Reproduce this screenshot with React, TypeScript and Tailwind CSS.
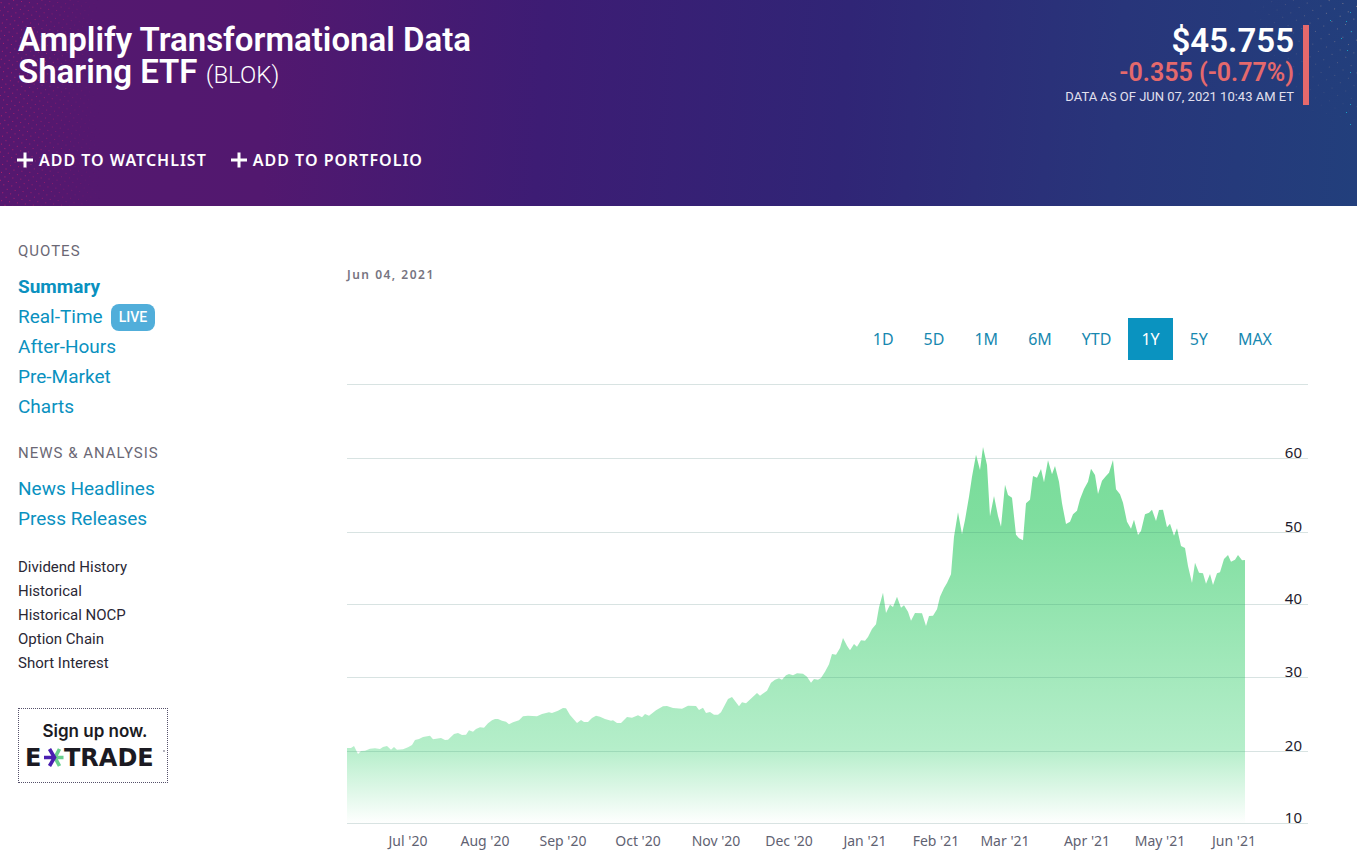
import React from "react";

interface NavLink {
  label: string;
  active?: boolean;
  live?: boolean;
}

const QUOTE_LINKS: NavLink[] = [
  { label: "Summary", active: true },
  { label: "Real-Time", live: true },
  { label: "After-Hours" },
  { label: "Pre-Market" },
  { label: "Charts" },
];

const NEWS_LINKS: NavLink[] = [
  { label: "News Headlines" },
  { label: "Press Releases" },
];

const MORE_LINKS = [
  "Dividend History",
  "Historical",
  "Historical NOCP",
  "Option Chain",
  "Short Interest",
];

const RANGES = ["1D", "5D", "1M", "6M", "YTD", "1Y", "5Y", "MAX"];

const GRID = [
  { y: 384.5, label: "" },
  { y: 458.5, label: "60" },
  { y: 532.5, label: "50" },
  { y: 604.5, label: "40" },
  { y: 677.5, label: "30" },
  { y: 751.5, label: "20" },
  { y: 823.5, label: "10" },
];

const MONTHS = [
  { x: 408, label: "Jul '20" },
  { x: 485, label: "Aug '20" },
  { x: 563, label: "Sep '20" },
  { x: 638, label: "Oct '20" },
  { x: 716, label: "Nov '20" },
  { x: 789, label: "Dec '20" },
  { x: 865, label: "Jan '21" },
  { x: 936, label: "Feb '21" },
  { x: 1005, label: "Mar '21" },
  { x: 1087, label: "Apr '21" },
  { x: 1160, label: "May '21" },
  { x: 1234, label: "Jun '21" },
];

// Closing prices, one x,y pair per session
const SERIES =
  "347,748 351,748 354,746 358,754 361,751 365,750.7 370,748.7 375,748.3 380,749 383,747 387,746 391,749.7 394,747 397,749.7 403,749.3 408,747.3 412,745 415,740 419,739 423,737 430,735.7 433,739.3 441,738 445,740 448,739.7 454,734 458,733 462,735 466,734.7 469,730.3 473,731.7 476,729 480,727.3 484,727.7 488,723.3 492,720.3 495,719 498,719 502,720.7 506,721.7 509,724.3 513,722.3 519,720.3 523,716.3 528,715.7 537,716.3 542,714 549,712.3 552,713 558,710.7 563,708 566,708.3 570,715 577,723 581,720 584,722 588,722 592,718 596,715.7 600,716.7 605,719 611,720.7 613,720.3 617,723 621,723 627,717 632,717.7 638,715.3 642,717.3 645,714 649,715.7 656,710.3 663,706.3 " +
  "667,706 673,708 682,708.7 688,705.7 696,706 699,710 703,707.7 706,713 710,712 714,714.7 718,714.7 721,712.3 728,699 732,697 739,706.3 742,702.3 746,703.3 757,693 760,695.7 767,690.7 771,682.7 775,679.7 779,678.3 782,679.7 786,675.3 789,674 793,675.3 797,673.3 803,673.7 807,676.7 811,682.7 814,679 818,679.7 821,678 825,671.7 829,664.3 832,654 836,654.7 840,648 843,638 847,645.7 850,650.3 854,644 857,646.7 861,640.3 865,640.7 868,637 872,629 876,624.3 879,607.3 883,592.7 886,613 890,604.7 893,607 897,596.7 901,607.7 904,605.3 908,611.7 911,620.7 915,613 922,613.3 926,626 929,616 933,615.7 937,609.3 " +
  "940,596.7 944,588 947,583 951,574.3 954,536.7 958,512.3 962,534.3 965,520 969,496.7 972,476.7 976,454.7 980,470 983,447 987,465 990,516.3 994,496 998,516 1001,526.7 1005,484.7 1008,495 1012,497.7 1016,534.7 1019,538.3 1023,540.3 1026,503.3 1030,499.7 1033,476 1037,477.7 1041,469 1044,482.3 1048,460.3 1052,474.3 1055,466 1059,481.7 1062,503.3 1066,524 1070,521.7 1073,514.3 1077,510.7 1080,499.3 1084,489 1088,481.7 1091,468.7 1095,475 1098,494 1102,480.7 " +
  "1106,476 1109,472.7 1113,460 1116,489.3 1120,494.3 1123,502.7 1127,521.7 1131,528.7 1134,519.7 1138,535 1141,531 1145,514.3 1149,512.7 1152,509.7 1156,521 1159,510 1163,509.7 1167,527.3 1170,523.7 1174,535.7 1177,528.3 1181,546 1185,548 1188,566 1192,583 1195,562.7 1199,572.7 1203,573.3 1206,583.7 1210,574 1213,585 1217,573.3 1220,572.3 1224,559 1228,555 1231,561.7 1235,559.7 1238,555 1242,560.3 1245,560";

const PlusIcon = () => (
  <svg viewBox="0 0 16 16" className="w-4 h-4" aria-hidden="true">
    <path d="M8 0.5V15.5M0 8H16" stroke="currentColor" strokeWidth="3" />
  </svg>
);

// Halftone dots in the header corners
const HeaderDots = () => (
  <svg
    className="absolute inset-0 w-full h-full pointer-events-none"
    aria-hidden="true"
  >
    <defs>
      <pattern
        id="dotsRed"
        width="8"
        height="8"
        patternUnits="userSpaceOnUse"
        patternTransform="rotate(8)"
      >
        <rect x="1" y="2" width="1" height="1" fill="#b3226c" />
        <rect x="5" y="6" width="1" height="1" fill="#b3226c" />
      </pattern>
      <pattern
        id="dotsTan"
        width="14"
        height="13"
        patternUnits="userSpaceOnUse"
        patternTransform="rotate(12)"
      >
        <rect x="3" y="3" width="1" height="1" fill="#85808f" />
        <rect x="10" y="9" width="1" height="1" fill="#85808f" />
      </pattern>
      <linearGradient id="fadeLeft">
        <stop offset="0" stopColor="#fff" />
        <stop offset="0.5" stopColor="#fff" stopOpacity="0.6" />
        <stop offset="1" stopColor="#fff" stopOpacity="0" />
      </linearGradient>
      <radialGradient id="fadeRight" cx="1" cy="0" r="1">
        <stop offset="0" stopColor="#fff" />
        <stop offset="1" stopColor="#fff" stopOpacity="0" />
      </radialGradient>
      <mask id="maskLeft" maskContentUnits="userSpaceOnUse">
        <rect width="100" height="206" fill="url(#fadeLeft)" />
      </mask>
      <mask id="maskRight" maskContentUnits="userSpaceOnUse">
        <rect width="110" height="130" fill="url(#fadeRight)" />
      </mask>
    </defs>
    <rect width="100" height="206" fill="url(#dotsRed)" mask="url(#maskLeft)" />
    <svg x="100%" overflow="visible">
      <g transform="translate(-110 0)">
        <rect width="110" height="130" fill="url(#dotsTan)" mask="url(#maskRight)" />
        <path
          d="M83 20h1v1h-1zM99 21h1v1h-1zM103 12h1v1h-1zM104 31h1v1h-1zM94 38h1v1h-1zM100 50h1v1h-1zM103 72h1v1h-1zM103 104h1v1h-1zM99 112h1v1h-1zM103 124h1v1h-1z"
          fill="#18a0c4"
        />
      </g>
    </svg>
  </svg>
);

const Header = () => (
  <header className="relative bg-[linear-gradient(94deg,#55186f_0%,#52186f_20%,#3d1c74_40%,#302576_62%,#28357a_82%,#223f7c_100%)] text-white">
    <HeaderDots />
    <div className="relative flex justify-between pl-[18px] pr-12 pt-6 h-[134px]">
      <h1 className="w-[470px] text-[33px] leading-8 font-semibold">
        Amplify Transformational Data Sharing ETF{" "}
        <span className="text-2xl leading-8 font-light">(BLOK)</span>
      </h1>
      <div className="self-start border-r-[6px] border-[#e5696c] pr-[9px] mt-px text-right">
        <div className="text-[33px] leading-8 font-semibold">$45.755</div>
        <div className="text-[25px] leading-8 font-semibold text-[#e5696c]">
          -0.355 (-0.77%)
        </div>
        <div className="text-[13px] leading-4 text-[#e2e0ee]">
          DATA AS OF JUN 07, 2021 10:43 AM ET
        </div>
      </div>
    </div>
    <div className="relative flex gap-6 px-[17px] pt-3 pb-8 font-['Noto_Sans','Open_Sans',sans-serif]">
      {["Add to Watchlist", "Add to Portfolio"].map((label) => (
        <button
          key={label}
          type="button"
          className="flex items-center gap-1.5 uppercase text-base leading-7 font-semibold tracking-[1px]"
        >
          <PlusIcon />
          {label}
        </button>
      ))}
    </div>
  </header>
);

const NavGroup = ({ title, links }: { title: string; links: NavLink[] }) => (
  <section>
    <h2 className="text-[15px] leading-5 tracking-[1px] uppercase text-[#6b6875]">
      {title}
    </h2>
    <ul className="mt-[11px] text-[19px] text-[#0a91bf]">
      {links.map((link) => (
        <li key={link.label} className="flex items-center gap-2 min-h-[30px]">
          <a href="#" className={link.active ? "font-bold" : ""}>
            {link.label}
          </a>
          {link.live && (
            <span className="rounded-lg bg-[#51aeda] px-2 text-sm leading-[27px] font-medium text-white">
              LIVE
            </span>
          )}
        </li>
      ))}
    </ul>
  </section>
);

const TradeBanner = () => (
  <a
    href="#"
    className="block w-[150px] h-[75px] border border-dotted border-[#55506a] pt-3 text-[#1b1a22]"
  >
    <div className="pl-1 text-center font-[Inter,sans-serif] text-[17px] leading-5 font-semibold">
      Sign up now.
    </div>
    <svg viewBox="0 0 148 36" className="w-full" role="img" aria-label="E*TRADE">
      <g
        fill="#1b1a22"
        fontFamily="'DejaVu Sans', sans-serif"
        fontWeight="700"
        fontSize="24"
      >
        <text x="6" y="25">
          E
        </text>
        <text x="45" y="25">
          TRADE
        </text>
      </g>
      <g fill="none" strokeWidth="3.6">
        <path d="M36 16.500L40.500 8M36 16.500L40.500 25M36 16.500H44.500" stroke="#69cf8d" />
        <path d="M25 16.500H36M30.500 8L35.500 16.500L30.500 25" stroke="#4a1fb0" />
      </g>
      <circle cx="145" cy="10" r="0.8" fill="#55506a" />
    </svg>
  </a>
);

const Sidebar = () => (
  <aside className="w-[329px] shrink-0 pt-[35px]">
    <nav className="flex flex-col gap-[21px]">
      <NavGroup title="Quotes" links={QUOTE_LINKS} />
      <NavGroup title="News & Analysis" links={NEWS_LINKS} />
      <ul className="text-[15px] leading-6 text-[#2a2735]">
        {MORE_LINKS.map((label) => (
          <li key={label}>
            <a href="#">{label}</a>
          </li>
        ))}
      </ul>
    </nav>
    <div className="mt-[33px]">
      <TradeBanner />
    </div>
  </aside>
);

const PriceChart = () => (
  <svg
    viewBox="347 384 961 468"
    className="block w-full font-['Noto_Sans','Open_Sans',sans-serif]"
    role="img"
    aria-label="BLOK price"
  >
    <defs>
      <linearGradient
        id="area"
        gradientUnits="userSpaceOnUse"
        x1="0"
        y1="447"
        x2="0"
        y2="824"
      >
        <stop offset="0" stopColor="#78dc99" />
        <stop offset="0.2" stopColor="#7fde9f" />
        <stop offset="0.8" stopColor="#b5eeca" />
        <stop offset="1" stopColor="#ffffff" />
      </linearGradient>
      <clipPath id="areaClip">
        <polygon points={`347,823 ${SERIES} 1245,823`} />
      </clipPath>
    </defs>
    {GRID.map((line) => (
      <line
        key={line.y}
        x1="347"
        x2="1308"
        y1={line.y}
        y2={line.y}
        stroke="#d8e3e2"
      />
    ))}
    <polygon points={`347,823 ${SERIES} 1245,823`} fill="url(#area)" />
    <g clipPath="url(#areaClip)">
      {GRID.slice(2).map((line) => (
        <line
          key={line.y}
          x1="347"
          x2="1245"
          y1={line.y}
          y2={line.y}
          stroke="#2f7a66"
          strokeOpacity="0.18"
        />
      ))}
    </g>
    <g fontSize="15" fill="#1d1a2b" textAnchor="end">
      {GRID.slice(1).map((line) => (
        <text key={line.y} x="1302" y={line.y - 0.5}>
          {line.label}
        </text>
      ))}
    </g>
    <g fontSize="14" fill="#5f6272" textAnchor="middle">
      {MONTHS.map((month) => (
        <text key={month.label} x={month.x} y="846">
          {month.label}
        </text>
      ))}
    </g>
  </svg>
);

const ChartPanel = () => {
  const [range, setRange] = React.useState("1Y");

  return (
    <main className="flex-1 min-w-0 pt-[61px]">
      <p className="text-xs leading-4 font-semibold tracking-[1.5px] text-[#777582] font-['Noto_Sans',sans-serif]">
        Jun 04, 2021
      </p>
      <div className="flex justify-end gap-1 mt-[35px] mb-6 pr-[23px] font-['Noto_Sans','Open_Sans',sans-serif]">
        {RANGES.map((item) => (
          <button
            key={item}
            type="button"
            onClick={() => setRange(item)}
            className={`px-[13px] text-base leading-[42px] ${
              item === range ? "bg-[#0a93c0] text-white" : "text-[#1788b0]"
            }`}
          >
            {item}
          </button>
        ))}
      </div>
      <PriceChart />
    </main>
  );
};

export default function App() {
  return (
    <div className="min-h-screen bg-white font-[Roboto,sans-serif]">
      <Header />
      <div className="flex pl-[18px] pr-[49px]">
        <Sidebar />
        <ChartPanel />
      </div>
    </div>
  );
}
